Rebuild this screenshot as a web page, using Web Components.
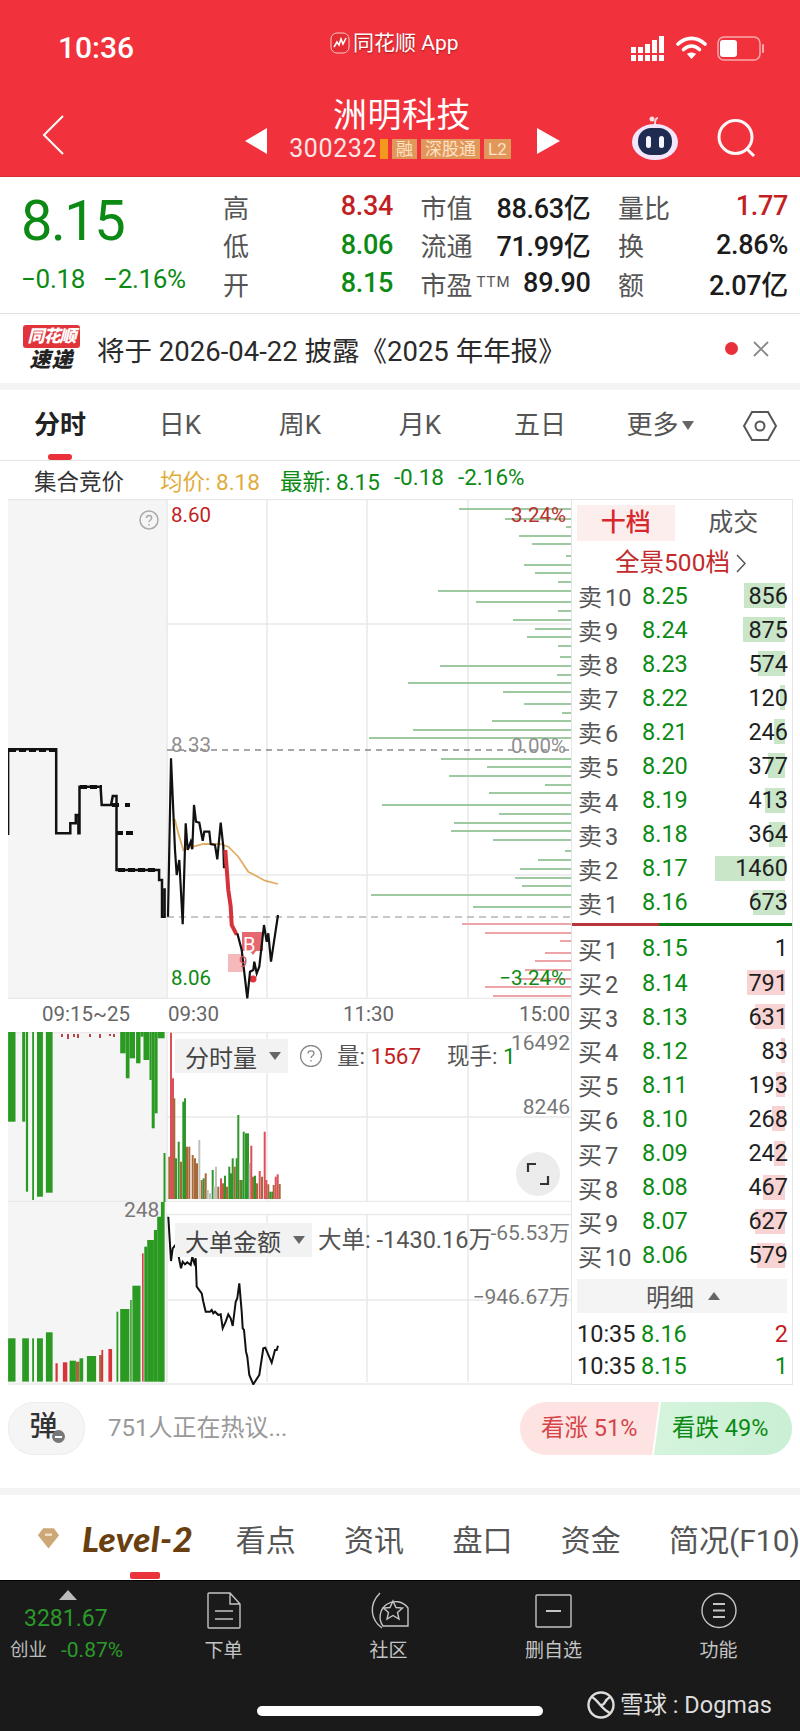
<!DOCTYPE html>
<html lang="zh">
<head>
<meta charset="utf-8">
<title>洲明科技</title>
<style>
  html, body { margin: 0; padding: 0; background: #fff; }
  body { width: 800px; height: 1731px; overflow: hidden; font-family: Roboto, "Noto Sans CJK SC", sans-serif; color: #222; }
  .band { display: block; height: 7px; background: #f4f4f4; }
</style>
</head>
<body>
<status-bar time="10:36" app="同花顺 App"></status-bar>
<stock-nav name="洲明科技" code="300232">
  <stock-tag>融</stock-tag><stock-tag>深股通</stock-tag><stock-tag>L2</stock-tag>
</stock-nav>
<quote-stats></quote-stats>
<notice-bar>将于 2026-04-22 披露《2025 年年报》</notice-bar>
<div class="band"></div>
<period-tabs></period-tabs>
<auction-row></auction-row>
<chart-section>
  <price-chart slot="charts"></price-chart>
  <time-axis slot="charts"></time-axis>
  <volume-chart slot="charts"></volume-chart>
  <flow-chart slot="charts"></flow-chart>
  <order-book slot="book"></order-book>
</chart-section>
<comment-bar></comment-bar>
<div class="band"></div>
<info-tabs></info-tabs>
<app-footer></app-footer>

<script>
const FONT = 'Roboto, "Noto Sans CJK SC", sans-serif';
const GREEN = '#0c8a14';
const RED = '#c21f24';

// every component is just a shadow root with its own style block
class Base extends HTMLElement {
  constructor() {
    super();
    this.attachShadow({ mode: 'open' });
  }
  connectedCallback() {
    this.shadowRoot.innerHTML = this.render();
  }
  attr(name, fallback = '') {
    return this.hasAttribute(name) ? this.getAttribute(name) : fallback;
  }
}

class StatusBar extends Base {
  render() {
    return `<style>
      :host { display: flex; height: 90px; background: #f1323c; color: #fff; font-family: ${FONT}; box-sizing: border-box; padding: 32px 36px 0 58px; justify-content: space-between; align-items: flex-start; }
      .time { font-size: 30px; font-weight: 500; line-height: 32px; width: 272px; }
      .app { display: flex; align-items: center; gap: 3px; font-size: 21px; line-height: 22px; text-shadow: 0 1px 2px rgba(90,0,0,.5); flex: 1; height: 22px; }
      .icons { display: flex; gap: 10px; margin-top: 4px; }
    </style>
    <div class="time">${this.attr('time')}</div>
    <div class="app">
      <svg width="20" height="22" viewBox="0 0 20 22"><rect x="1" y="1" width="18" height="20" rx="6" fill="#e52b33" stroke="#f9c9c9"/><path d="M4 15l3-5 2 3 2-6 2 5 3-6" fill="none" stroke="#fff" stroke-width="1.6"/></svg>
      <span>${this.attr('app')}</span>
    </div>
    <div class="icons">
      <svg width="33" height="25" viewBox="0 0 33 25" fill="#fff">
        <rect x="0" y="11" width="5" height="6"/><rect x="0" y="19" width="5" height="6"/>
        <rect x="7" y="11" width="5" height="6"/><rect x="7" y="19" width="5" height="6"/>
        <rect x="14" y="8" width="5" height="9"/><rect x="14" y="19" width="5" height="6"/>
        <rect x="21" y="4" width="5" height="13"/><rect x="21" y="19" width="5" height="6"/>
        <rect x="28" y="0" width="5" height="17"/><rect x="28" y="19" width="5" height="6"/>
      </svg>
      <svg width="31" height="25" viewBox="0 0 31 25" fill="none" stroke="#fff" stroke-width="3.6" stroke-linecap="round" style="margin-left:2px">
        <path d="M2 8c8-7.500 19-7.500 27 0"/><path d="M7.500 13.500c5-4.500 11-4.500 16 0"/><path d="M15.500 23l-4.500-5c2.700-2 6.300-2 9 0z" fill="#fff" stroke="none"/>
      </svg>
      <svg width="47" height="25" viewBox="0 0 47 25" style="margin-left:0">
        <rect x="1" y="1" width="42" height="23" rx="6" fill="none" stroke="#f8a9ac" stroke-width="1.500"/>
        <rect x="3" y="4" width="17" height="17" rx="3" fill="#fff"/>
        <rect x="45" y="8" width="2" height="9" rx="1" fill="#f8a9ac"/>
      </svg>
    </div>`;
  }
}

class StockTag extends Base {
  render() {
    return `<style>
      :host { display: inline-block; height: 20px; line-height: 20px; padding: 0 4px; background: #e2975a; color: #fbe3c6; font-size: 17px; text-align: center; font-family: ${FONT}; }
    </style><slot></slot>`;
  }
}

class StockNav extends Base {
  render() {
    return `<style>
      :host { display: grid; grid-template-columns: 245px 22px 270px 23px 1fr; height: 87px; background: #f1323c; color: #fff; font-family: ${FONT}; box-sizing: border-box; border-bottom: 1px solid #d92d33; align-items: center; }
      .back { padding: 6px 0 0 42px; }
      .mid { text-align: center; height: 87px; }
      .name { font-size: 34px; line-height: 46px; margin-top: 2px; letter-spacing: .5px; }
      .code { display: flex; justify-content: center; align-items: center; gap: 4px; height: 20px; margin-top: 1px; margin-left: -4px; }
      .num { font-size: 25px; letter-spacing: .6px; color: #fbe6e6; line-height: 20px; }
      .bar { width: 8px; height: 20px; background: #f39a1d; margin-left: -1px; margin-right: 0; }
      .tri { margin-top: 14px; }
      .right { display: flex; align-items: center; padding: 8px 0 0 72px; gap: 39px; }
    </style>
    <div class="back"><svg width="24" height="40" viewBox="0 0 24 40" fill="none" stroke="#fff" stroke-width="2"><path d="M21 1 2 20l19 19"/></svg></div>
    <svg class="tri" width="22" height="26" viewBox="0 0 22 26"><path d="M22 0v26L0 13z" fill="#fff"/></svg>
    <div class="mid">
      <div class="name">${this.attr('name')}</div>
      <div class="code"><span class="num">${this.attr('code')}</span><span class="bar"></span><slot></slot></div>
    </div>
    <svg class="tri" width="23" height="26" viewBox="0 0 23 26"><path d="M0 0v26l23-13z" fill="#fff"/></svg>
    <div class="right">
      <svg width="46" height="44" viewBox="0 0 46 44">
        <path d="M23 8c0-4 1-6 3-6" fill="none" stroke="#f6d5df" stroke-width="2"/><circle cx="20" cy="3" r="2.500" fill="#f9dfe5"/>
        <ellipse cx="23" cy="26" rx="23" ry="18" fill="#f1e6fb"/>
        <rect x="6" y="12" width="34" height="27" rx="13" fill="#1f2b50"/>
        <rect x="14" y="20" width="5" height="12" rx="2.500" fill="#f5f5ff"/><rect x="27" y="20" width="5" height="12" rx="2.500" fill="#f5f5ff"/>
      </svg>
      <svg width="40" height="38" viewBox="0 0 40 38" fill="none" stroke="#fff8f8" stroke-width="3"><circle cx="18.500" cy="18" r="16.500"/><path d="m30 30 7 7"/></svg>
    </div>`;
  }
}

class StatPair extends Base {
  render() {
    const color = this.attr('color', '#1c1c1c');
    return `<style>
      :host { display: flex; justify-content: space-between; align-items: center; font-family: ${FONT}; font-size: 27px; height: 38.500px; white-space: nowrap; }
      .k { color: #555; font-size: 26px; }
      .k sup { font-size: 15px; vertical-align: 8px; line-height: 0; margin-left: 4px; letter-spacing: 1px; }
      .v { color: ${color}; font-weight: 500; letter-spacing: -.3px; }
    </style>
    <span class="k">${this.attr('k')}${this.hasAttribute('sup') ? `<sup>${this.attr('sup')}</sup>` : ''}</span>
    <span class="v">${this.attr('v')}</span>`;
  }
}

class QuoteStats extends Base {
  render() {
    const pairs = [
      ['高', '8.34', RED], ['市值', '88.63亿'], ['量比', '1.77', RED],
      ['低', '8.06', GREEN], ['流通', '71.99亿'], ['换', '2.86%'],
      ['开', '8.15', GREEN], ['市盈', '89.90', '', 'TTM'], ['额', '2.07亿']
    ];
    return `<style>
      :host { display: flex; height: 137px; box-sizing: border-box; border-bottom: 1px solid #e2e2e2; font-family: ${FONT}; padding: 10px 0 0 21px; }
      .left { width: 202px; }
      .big { font-size: 56px; line-height: 64px; color: ${GREEN}; margin-top: 2px; letter-spacing: -1.500px; transform-origin: left; }
      .chg { display: flex; gap: 18px; font-size: 26px; color: ${GREEN}; margin-top: 11px; white-space: nowrap; letter-spacing: -.3px; }
      .grid { display: grid; grid-template-columns: 170px 170px 170px; column-gap: 27.500px; align-content: start; }
    </style>
    <div class="left">
      <div class="big">8.15</div>
      <div class="chg"><span>−0.18</span><span>−2.16%</span></div>
    </div>
    <div class="grid">
      ${pairs.map(p => `<stat-pair k="${p[0]}" v="${p[1]}" ${p[2] ? `color="${p[2]}"` : ''} ${p[3] ? `sup="${p[3]}"` : ''}></stat-pair>`).join('')}
    </div>`;
  }
}

class NoticeBar extends Base {
  render() {
    return `<style>
      :host { display: flex; align-items: center; height: 69px; font-family: ${FONT}; padding-left: 23px; position: relative; }
      .logo { width: 57px; text-align: center; font-style: italic; font-weight: 900; margin-right: 17px; }
      .logo b { display: block; background: #e0343a; color: #fff; font-size: 17px; line-height: 23px; border-radius: 3px; letter-spacing: -1px; }
      .logo i { display: block; color: #222; font-size: 21px; line-height: 24px; letter-spacing: 1px; }
      .txt { flex: 1; font-size: 27.500px; color: #2a2a2a; white-space: nowrap; }
      .dot { width: 13px; height: 13px; border-radius: 50%; background: #e8303a; margin-right: 15px; }
      svg { margin-right: 31px; }
    </style>
    <div class="logo"><b>同花顺</b><i>速递</i></div>
    <div class="txt"><slot></slot></div>
    <div class="dot"></div>
    <svg width="16" height="16" viewBox="0 0 16 16" stroke="#888" stroke-width="1.800"><path d="m1 1 14 14M15 1 1 15"/></svg>`;
  }
}

class PeriodTabs extends Base {
  render() {
    const tabs = ['分时', '日K', '周K', '月K', '五日'];
    return `<style>
      :host { display: grid; grid-template-columns: repeat(6, 120px) 80px; height: 71px; box-sizing: border-box; border-bottom: 1px solid #e6e6e6; font-family: ${FONT}; font-size: 26px; color: #555; }
      .t { position: relative; text-align: center; line-height: 70px; }
      .on { color: #222; font-weight: 700; }
      .on::after { content: ""; position: absolute; left: 48px; top: 64px; width: 24px; height: 6px; border-radius: 3px; background: #ea3038; }
      .more i { display: inline-block; width: 0; height: 0; border: 6px solid transparent; border-top: 9px solid #666; border-bottom: 0; margin-left: 3px; vertical-align: 4px; }
      .hex { display: flex; justify-content: center; padding-top: 20px; box-sizing: border-box; }
    </style>
    ${tabs.map((t, i) => `<div class="t ${i === 0 ? 'on' : ''}">${t}</div>`).join('')}
    <div class="t more">更多<i></i></div>
    <div class="hex"><svg width="34" height="32" viewBox="0 0 34 32" fill="none" stroke="#555" stroke-width="2"><path d="M9 2h16l8 14-8 14H9L1 16z"/><circle cx="17" cy="16" r="4.500"/></svg></div>`;
  }
}

class AuctionRow extends Base {
  render() {
    return `<style>
      :host { display: flex; align-items: center; height: 38px; padding-left: 34px; font-family: ${FONT}; font-size: 22.500px; white-space: nowrap; }
      .a { color: #333; width: 126px; }
      .o { color: #e0ac3c; width: 120px; }
      .g { color: ${GREEN}; display: flex; gap: 14px; }
    </style>
    <span class="a">集合竞价</span><span class="o">均价: 8.18</span>
    <span class="g"><span>最新: 8.15</span><span>-0.18</span><span>-2.16%</span></span>`;
  }
}

class ChartSection extends Base {
  render() {
    return `<style>
      :host { display: grid; grid-template-columns: 563px 222px; height: 886px; padding-left: 8px; }
      .charts { display: flex; flex-direction: column; }
    </style>
    <div class="charts"><slot name="charts"></slot></div>
    <slot name="book"></slot>`;
  }
}

// zoomed crops were not square, these turn crop coords back to page coords
const fromCrop3 = pts => pts.map(([x, y]) => `${(x / 2.703).toFixed(1)},${(700 + y / 3).toFixed(1)}`).join(' ');
const fromCropP = (pts, top) => pts.map(([x, y]) => `${(160 + x / 3).toFixed(1)},${(top + y / 3).toFixed(1)}`).join(' ');

const SELL_DEPTH = [[459,509],[505,519],[566,527],[519,536],[532,544],[566,556],[524,565],[535,573],[558,582],[438,591],[476,602],[558,611],[513,620],[535,629],[527,637],[558,646],[560,657],[440,666],[557,675],[408,683],[503,692],[524,704],[562,713],[492,721],[413,730],[369,738],[441,759],[487,767],[449,776],[545,785],[489,793],[382,805],[499,814],[454,823],[451,831],[493,840],[565,851],[538,860],[520,869],[515,878],[522,886],[371,895],[473,907]];
const BUY_DEPTH = [[462,924],[485,933],[560,941],[545,953],[535,961],[525,970],[518,979],[485,987],[493,996]];

const AUCTION_LINE = [[22,405],[22,148],[152,148],[152,400],[190,400],[190,370],[205,370],[205,345],[212,345],[212,400],[215,400],[215,260],[272,260],[275,315],[300,315],[305,288],[315,288],[315,510],[430,510],[430,540],[438,540],[438,650],[445,650],[445,565]];
const PRICE_A = [[24,500],[33,25],[45,300],[50,375],[58,330],[68,523],[77,220],[83,300],[92,275],[97,298],[102,165],[108,215],[118,218],[128,272],[133,245],[148,245],[152,282],[165,285],[172,328],[182,218],[190,290],[192,355]];
const PRICE_RED = [[196,300],[205,420],[212,470],[215,525],[228,550],[232,550]];
const PRICE_B = [[232,550],[245,600],[262,745],[270,665],[280,660],[283,635],[290,670],[298,650],[312,525],[320,575],[325,550],[333,635],[342,575],[354,495]];
const AVG = [[38,210],[45,210],[55,250],[70,300],[100,290],[130,282],[180,282],[205,290],[235,320],[265,365],[315,392],[354,402]];

class PriceChart extends Base {
  render() {
    const depth = (list, color) => list.map(([x, y]) => `<line x1="${x}" y1="${y}" x2="571" y2="${y}" stroke="${color}" stroke-width="2"/>`).join('');
    return `<style>
      :host { display: block; position: relative; width: 563px; height: 500px; font-family: ${FONT}; font-size: 20.500px; }
      svg { display: block; }
      span { position: absolute; line-height: 24px; white-space: nowrap; }
      .l { left: 163px; } .r { right: 5px; }
      .q { left: 131px; top: 11px; }
    </style>
    <svg width="563" height="500" viewBox="8 499 563 500">
      <rect x="8" y="499" width="159" height="500" fill="#f5f5f5"/>
      <g stroke="#e9e9e9" stroke-width="1.500">
        <path d="M8 499.500h563M167 499v500M267 499v500M367 499v500M468 499v500M8 998.500h563M167 624h404M167 875h404"/>
      </g>
      <path d="M8 624h159M8 875h159" stroke="#fff" stroke-width="1" stroke-dasharray="1 3"/>
      ${depth(SELL_DEPTH, '#9fc9a1')}${depth(BUY_DEPTH, '#eda4a8')}
      <line x1="167" y1="750" x2="571" y2="750" stroke="#8a8a8a" stroke-width="1.500" stroke-dasharray="6 5"/>
      <line x1="167" y1="917" x2="571" y2="917" stroke="#b5b5b5" stroke-width="1.500" stroke-dasharray="7 5"/>
      <polyline points="${fromCrop3(AUCTION_LINE)}" fill="none" stroke="#111" stroke-width="2.500"/>
      <path d="M9 750h48M80 787h22M112 805h10M116 833h18M125 805h5M116 833h0M118 870h38" stroke="#111" stroke-width="4" stroke-dasharray="7 3"/>
      <polyline points="${fromCropP(AVG, 750)}" fill="none" stroke="#e2ac62" stroke-width="1.800"/>
      <polyline points="${fromCropP(PRICE_A, 750)}" fill="none" stroke="#111" stroke-width="2.200"/>
      <polyline points="${fromCropP(PRICE_RED, 750)}" fill="none" stroke="#d6323a" stroke-width="4"/>
      <rect x="228" y="954" width="15" height="18" rx="1" fill="#f6b9bb"/>
      <path d="M242 932h21v19h-7l-3 4-3-4h-8z" fill="#e4686d"/>
      <circle cx="253" cy="979" r="3.500" fill="#e0343a"/>
      <polyline points="${fromCropP(PRICE_B, 750)}" fill="none" stroke="#111" stroke-width="2.200"/>
    </svg>
    <span class="q"><svg width="20" height="20" viewBox="0 0 20 20"><circle cx="10" cy="10" r="9" fill="none" stroke="#aaa" stroke-width="1.500"/><path d="M7.500 8c0-3.200 5.200-3.200 5.200 0 0 2-2.600 2-2.600 4M10.100 14v1.500" fill="none" stroke="#aaa" stroke-width="1.500"/></svg></span>
    <span class="l" style="top:4px;color:${RED}">8.60</span>
    <span class="r" style="top:4px;color:#b8312f">3.24%</span>
    <span class="l" style="top:234px;color:#8f8f8f">8.33</span>
    <span class="r" style="top:235px;color:#8f8f8f">0.00%</span>
    <span class="l" style="top:467px;color:${GREEN}">8.06</span>
    <span class="r" style="top:467px;color:${GREEN}">−3.24%</span>
    <span style="left:235px;top:434px;color:#fff;font-size:20px">B</span>
    <span style="left:231px;top:451px;color:#c9545a;font-size:15px">9</span>`;
  }
}

class TimeAxis extends Base {
  render() {
    return `<style>
      :host { display: block; position: relative; height: 33px; font-family: ${FONT}; font-size: 20.500px; color: #666; }
      span { position: absolute; top: 3px; line-height: 24px; }
    </style>
    <span style="left:34px">09:15~25</span><span style="left:160px">09:30</span>
    <span style="left:335px">11:30</span><span style="right:1px">15:00</span>`;
  }
}

const hang = [[22,42,305],[60,68,305],[70,76,515],[87,92,540],[100,116,530],[124,142,518],[325,340,100],[340,350,175],[350,365,115],[368,380,130],[380,388,50],[388,404,120],[404,410,180],[410,418,325],[418,426,280],[426,445,55]];
const rise = [[25,380,'b'],[30,8,'r'],[36,145,'r'],[40,205,'b'],[45,385,'g'],[53,335,'g'],[60,395,'b'],[67,215,'g'],[72,205,'g'],[78,350,'b'],[85,350,'b'],[95,375,'b'],[102,385,'b'],[108,400,'b'],[115,330,'y'],[122,450,'b'],[128,445,'g'],[134,430,'b'],[140,480,'y'],[147,490,'y'],[155,420,'g'],[160,470,'y'],[165,410,'y'],[172,470,'b'],[180,445,'r'],[186,460,'b'],[192,437,'g'],[198,470,'b'],[205,410,'g'],[210,430,'g'],[215,385,'g'],[221,410,'b'],[227,385,'g'],[232,255,'g'],[238,450,'b'],[242,450,'g'],[248,305,'g'],[255,310,'g'],[261,310,'g'],[266,400,'y'],[271,347,'r'],[276,440,'b'],[282,437,'g'],[288,460,'b'],[296,423,'r'],[303,440,'b'],[311,305,'r'],[316,450,'r'],[322,463,'b'],[328,485,'g'],[334,485,'g'],[338,465,'b'],[344,440,'r'],[350,433,'r'],[356,462,'b']];
const BAR = { r: '#dc5157', g: '#2f962a', b: '#a8693a', y: '#bfc2bb' };

// small dropdown chip used on the two lower panes
class PaneChip extends Base {
  render() {
    return `<style>
      :host { position: absolute; display: flex; align-items: center; gap: 12px; box-sizing: border-box; height: 34px; padding: 0 7px 0 10px; background: #f2f2f2; font-size: 24px; color: #444; white-space: nowrap; }
      i { width: 0; height: 0; border: 6px solid transparent; border-top: 8px solid #666; border-bottom: 0; }
    </style><slot></slot><i></i>`;
  }
}

class VolumeChart extends Base {
  render() {
    const X = x => (x / 2.703).toFixed(1);
    return `<style>
      :host { display: block; position: relative; width: 563px; height: 170px; font-family: ${FONT}; font-size: 21px; color: #777; }
      svg { display: block; }
      span { position: absolute; line-height: 24px; white-space: nowrap; }
      pane-chip { left: 167px; top: 7px; }
      .exp { position: absolute; left: 508px; top: 120px; width: 44px; height: 44px; border-radius: 50%; background: #ececec; display: flex; align-items: center; justify-content: center; }
    </style>
    <svg width="563" height="170" viewBox="8 1032 563 170">
      <rect x="8" y="1032" width="159" height="170" fill="#f5f5f5"/>
      <path d="M8 1032.500h563M167 1032v170M267 1032v170M367 1032v170M468 1032v170M167 1117h404M8 1201.500h563" stroke="#e9e9e9" stroke-width="1.500"/>
      ${hang.map(([a, b, v]) => `<rect x="${X(a)}" y="1032" width="${((b - a) / 2.703).toFixed(1)}" height="${((v - 36) / 3).toFixed(1)}" fill="#2a9a22"/>`).join('')}
      <path d="M62 1034v3M68 1034v5M74 1034v3M78 1034v4M90 1034v3M100 1034v4M110 1034v2M114 1034v3" stroke="#b44" stroke-width="2"/>
      <rect x="163.500" y="1153" width="2" height="49" fill="#2a9a22"/>
      ${rise.map(([x, t, c]) => `<rect x="${(160 + x / 3).toFixed(1)}" y="${(1030 + t / 3).toFixed(1)}" width="2" height="${((507 - t) / 3).toFixed(1)}" fill="${BAR[c]}"/>`).join('')}
    </svg>
    <pane-chip>分时量</pane-chip>
    <span style="left:292px;top:13px"><svg width="22" height="22" viewBox="0 0 22 22" style="display:block"><circle cx="11" cy="11" r="10.500" fill="none" stroke="#888" stroke-width="1.300"/><path d="M8 8.500c0-3.600 6-3.600 6 0 0 2.200-3 2.300-3 4.500M11 15v1.500" fill="none" stroke="#888" stroke-width="1.300"/></svg></span>
    <span style="left:329px;top:12px;font-size:22.500px;color:#555">量: <b style="font-weight:400;color:${RED}">1567</b></span>
    <span style="left:439px;top:12px;font-size:22.500px;color:#555">现手: <b style="font-weight:400;color:${GREEN}">1</b></span>
    <span style="right:1px;top:-1px">16492</span>
    <span style="right:1px;top:63px">8246</span>
    <div class="exp"><svg width="24" height="24" viewBox="0 0 24 24" fill="none" stroke="#333" stroke-width="2.200"><path d="M10 2H2v8M14 22h8v-8"/></svg></div>`;
  }
}

const FLOW = [[25,5],[33,138],[38,100],[48,88],[57,130],[63,160],[68,140],[75,148],[82,142],[92,150],[97,125],[103,145],[107,130],[110,215],[125,235],[130,260],[137,290],[150,290],[155,285],[160,295],[165,290],[175,300],[182,298],[188,340],[197,320],[205,298],[212,310],[218,333],[227,260],[232,250],[238,205],[245,290],[248,340],[252,345],[258,410],[262,425],[268,480],[280,508],[298,480],[310,400],[316,398],[335,443],[345,405],[350,405],[354,392]];
const lowBars = [[18,22,1060],[22,42,955],[60,78,955],[87,92,955],[100,116,955],[124,142,937],[150,156,1030,'#d9333a'],[170,182,1027,'#d9333a'],[188,205,1022],[205,215,1025,'#a8693a'],[215,225,1015],[235,260,1008],[268,278,1005,'#a8693a'],[274,279,990,'#d9333a'],[293,303,987,'#d9333a'],[315,320,875],[325,350,867],[352,356,840],[358,380,797],[384,388,700,'#d9333a'],[390,398,680],[398,416,660],[416,425,630],[425,440,590],[435,445,515]];

class FlowChart extends Base {
  render() {
    const X = x => (x / 2.703).toFixed(1);
    return `<style>
      :host { display: block; position: relative; width: 563px; height: 183px; font-family: ${FONT}; font-size: 21px; color: #777; }
      svg { display: block; }
      span { position: absolute; line-height: 24px; white-space: nowrap; }
      pane-chip { left: 167px; top: 21px; }
    </style>
    <svg width="563" height="183" viewBox="8 1202 563 183">
      <rect x="8" y="1202" width="159" height="181" fill="#f5f5f5"/>
      <path d="M167 1214.500h404M167 1214v168M267 1214v168M367 1214v168M468 1214v168M167 1300h404M8 1384h563" stroke="#e9e9e9" stroke-width="1.500"/>
      ${lowBars.map(([a, b, v, c]) => `<rect x="${X(a)}" y="${(1020 + v / 3).toFixed(1)}" width="${((b - a) / 2.703).toFixed(1)}" height="${((1085 - v) / 3).toFixed(1)}" fill="${c || '#2a9a22'}"/>`).join('')}
      <polyline points="${fromCropP(FLOW, 1215)}" fill="none" stroke="#111" stroke-width="2"/>
    </svg>
    <span style="left:116px;top:-4px;color:#777">248</span>
    <pane-chip>大单金额</pane-chip>
    <span style="left:310px;top:26px;font-size:23.500px;color:#555">大单: -1430.16万</span>
    <span style="right:1px;top:19px">-65.53万</span>
    <span style="right:1px;top:83px">−946.67万</span>`;
  }
}

class BookRow extends Base {
  render() {
    const bar = this.attr('bar', '0');
    const bg = this.attr('side') === '卖' ? '#c9e6c9' : '#f8d3d3';
    return `<style>
      :host { display: grid; grid-template-columns: 64px 1fr auto; align-items: center; position: relative; height: 34.100px; padding: 0 4px 0 6px; font-family: ${FONT}; font-size: 23.500px; white-space: nowrap; }
      .s { color: #555; }
      .s b { font-weight: 400; font-size: 24px; margin-right: 3px; }
      .p { color: ${GREEN}; }
      .q { color: #1f1f1f; position: relative; }
      .bg { position: absolute; right: 7px; top: 5px; height: 25px; width: ${bar}px; background: ${bg}; }
    </style>
    <div class="bg"></div>
    <span class="s"><b>${this.attr('side')}</b>${this.attr('n')}</span>
    <span class="p">${this.attr('price')}</span>
    <span class="q">${this.attr('qty')}</span>`;
  }
}

class OrderBook extends Base {
  render() {
    const sell = [[10,'8.25',856,41],[9,'8.24',875,42],[8,'8.23',574,27],[7,'8.22',120,5],[6,'8.21',246,11],[5,'8.20',377,17],[4,'8.19',413,20],[3,'8.18',364,16],[2,'8.17',1460,70],[1,'8.16',673,32]];
    const buy = [[1,'8.15',1,0],[2,'8.14',791,38],[3,'8.13',631,30],[4,'8.12',83,4],[5,'8.11',193,9],[6,'8.10',268,13],[7,'8.09',242,11],[8,'8.08',467,22],[9,'8.07',627,30],[10,'8.06',579,28]];
    const row = (side, r) => `<book-row side="${side}" n="${r[0]}" price="${r[1]}" qty="${r[2]}" bar="${r[3]}"></book-row>`;
    return `<style>
      :host { display: block; box-sizing: border-box; height: 886px; border: 1px solid #e4e4e4; font-family: ${FONT}; width: 222px; }
      .tabs { display: flex; height: 36px; margin: 5px 0 0 5px; font-size: 25px; line-height: 36px; text-align: center; }
      .tabs div { width: 98px; color: #555; }
      .tabs .on { background: #fdeeee; color: #d8282d; font-weight: 500; }
      .tabs div + div { width: 118px; }
      .all { height: 38px; line-height: 44px; text-align: center; font-size: 24.500px; color: #c32a2c; margin-bottom: -1px; padding-right: 3px; }
      .all svg { margin-left: 6px; vertical-align: -2px; }
      .sep { height: 3px; margin: 4px 0 5px; background: linear-gradient(90deg, #b8343a 0 87px, #0d7d14 87px); }
      .head { height: 34px; margin: 7px 5px 5px; background: #f4f4f4; display: flex; align-items: center; justify-content: center; gap: 14px; font-size: 24px; color: #555; padding-left: 2px; box-sizing: border-box; }
      .head i { width: 0; height: 0; border: 6px solid transparent; border-bottom: 8px solid #666; border-top: 0; }
      .d { display: grid; grid-template-columns: 64px 1fr auto; align-items: center; height: 32px; padding: 0 4px 0 5px; font-size: 23.500px; color: #222; }
      .d span:nth-child(2) { color: ${GREEN}; }
    </style>
    <div class="tabs"><div class="on">十档</div><div>成交</div></div>
    <div class="all">全景500档<svg width="10" height="19" viewBox="0 0 10 19" fill="none" stroke="#555" stroke-width="1.500"><path d="m1 1 8 8.500L1 18"/></svg></div>
    ${sell.map(r => row('卖', r)).join('')}
    <div class="sep"></div>
    ${buy.map(r => row('买', r)).join('')}
    <div class="head">明细<i></i></div>
    <div class="d"><span>10:35</span><span>8.16</span><span style="color:${RED}">2</span></div>
    <div class="d"><span>10:35</span><span>8.15</span><span style="color:${GREEN}">1</span></div>`;
  }
}

class CommentBar extends Base {
  render() {
    return `<style>
      :host { display: flex; height: 103px; box-sizing: border-box; padding: 17px 8px 0; font-family: ${FONT}; }
      .dan { position: relative; width: 77px; height: 53px; border-radius: 26px; background: #f5f5f5; box-shadow: inset 0 0 0 1px #eee; text-align: center; font-size: 28px; line-height: 50px; font-weight: 500; color: #333; padding-right: 6px; box-sizing: border-box; }
      .dan i { position: absolute; left: 44px; top: 28px; width: 13px; height: 13px; border-radius: 50%; background: #777; }
      .dan i::after { content: ""; position: absolute; left: 3px; top: 6px; width: 7px; height: 2px; background: #fff; }
      .hint { flex: 1; margin-left: 23px; font-size: 24px; line-height: 53px; color: #999; white-space: nowrap; }
      .vote { display: flex; height: 53px; font-size: 23.500px; line-height: 53px; white-space: nowrap; }
      .up { width: 139px; background: #fde3e1; color: #d5454a; border-radius: 26px 0 0 26px; padding-left: 21px; box-sizing: border-box; clip-path: polygon(0 0, 100% 0, calc(100% - 7px) 100%, 0 100%); }
      .down { width: 138px; margin-left: -5px; background: linear-gradient(90deg, #d5f4dd, #c9efd4); color: ${GREEN}; border-radius: 0 26px 26px 0; padding-left: 18px; box-sizing: border-box; clip-path: polygon(7px 0, 100% 0, 100% 100%, 0 100%); }
    </style>
    <div class="dan">弹<i></i></div>
    <div class="hint">751人正在热议...</div>
    <div class="vote"><div class="up">看涨 51%</div><div class="down">看跌 49%</div></div>`;
  }
}

class InfoTabs extends Base {
  render() {
    return `<style>
      :host { display: flex; position: relative; height: 85px; align-items: center; padding-left: 37px; overflow: hidden; font-family: ${FONT}; font-size: 30px; color: #555; white-space: nowrap; }
      svg { margin-right: 22px; }
      .lv { position: relative; font-family: Lato, Roboto, sans-serif; font-style: italic; font-weight: 900; font-size: 35px; color: #6a3f10; width: 174px; letter-spacing: .5px; }
      .lv::after { content: ""; position: absolute; left: 48px; top: 55px; width: 30px; height: 7px; border-radius: 2px; background: #e9323a; }
      span { width: 108.300px; flex: none; }
      span:last-child { width: auto; }
    </style>
    <svg width="26" height="24" viewBox="0 0 26 24"><path d="M7 1h12l6 8-12 15L1 9z" fill="#cda876"/><rect x="9" y="7" width="8" height="2.500" fill="#f3e6d2"/></svg>
    <div class="lv">Level-2</div>
    <span>看点</span><span>资讯</span><span>盘口</span><span>资金</span><span>简况(F10)</span>`;
  }
}

class NavItem extends Base {
  render() {
    return `<style>
      :host { display: flex; flex-direction: column; align-items: center; padding-top: 11px; font-family: ${FONT}; font-size: 19px; color: #c4c4c4; }
      .i { height: 37px; display: flex; align-items: center; margin-bottom: 6px; }
    </style>
    <div class="i"><slot></slot></div><div>${this.attr('label')}</div>`;
  }
}

class AppFooter extends Base {
  render() {
    return `<style>
      :host { display: block; position: relative; height: 151px; background: #1a1a1a; border-top: 1px solid #000; box-sizing: border-box; font-family: ${FONT}; }
      .nav { display: grid; grid-template-columns: 141px repeat(4, 165px); }
      .idx { position: relative; font-size: 23px; color: #2a9a2a; padding: 21px 0 0 24px; line-height: 34px; }
      .idx::before { content: ""; position: absolute; left: 59px; top: 9px; border: 9px solid transparent; border-bottom: 10px solid #bbb; border-top: 0; }
      .sub { display: flex; margin-left: -14px; gap: 14px; line-height: 28px; font-size: 21px; white-space: nowrap; }
      .sub b { font-weight: 400; color: #bbb; font-size: 18.500px; }
      .home { position: absolute; left: 257px; top: 125px; width: 286px; height: 10px; border-radius: 5px; background: #fff; }
      .mark { position: absolute; left: 587px; top: 109px; display: flex; align-items: center; gap: 5px; color: #ddd; font-size: 23.500px; line-height: 28px; white-space: nowrap; }
    </style>
    <div class="nav">
      <div class="idx">3281.67<div class="sub"><b>创业</b><span>-0.87%</span></div></div>
      <nav-item label="下单"><svg width="34" height="37" viewBox="0 0 34 37" fill="none" stroke="#c4c4c4" stroke-width="1.400"><path d="M2 1h21l10 11v23a1 1 0 0 1-1 1H2a1 1 0 0 1-1-1V2a1 1 0 0 1 1-1zM23 1v11h10M8 19h18M8 27h18"/></svg></nav-item>
      <nav-item label="社区"><svg width="40" height="37" viewBox="0 0 40 37" fill="none" stroke="#c4c4c4" stroke-width="1.400"><path d="M13 36C2 28 -1 13 11 1"/><path d="M14 34h25V16A12.500 12.500 0 1 0 14 34z" transform="translate(0 0)"/><path d="m24 9 3 6.500 6.500.5-5 4.500 1.500 6.500-6-3.500-6 3.500 1.500-6.500-5-4.500 6.500-.5z"/></svg></nav-item>
      <nav-item label="删自选"><svg width="37" height="34" viewBox="0 0 37 34" fill="none" stroke="#c4c4c4" stroke-width="1.400"><rect x="1" y="1" width="35" height="32" rx="1"/><path d="M11 17h15" stroke-width="2"/></svg></nav-item>
      <nav-item label="功能"><svg width="36" height="37" viewBox="0 0 36 37" fill="none" stroke="#c4c4c4" stroke-width="1.400"><circle cx="18" cy="18.500" r="17"/><path d="M12 12h12M12 18.500h12M12 25h12" stroke-width="2"/></svg></nav-item>
    </div>
    <div class="home"></div>
    <div class="mark">
      <svg width="28" height="30" viewBox="0 0 28 30" fill="none" stroke="#ddd" stroke-width="2.400"><circle cx="14" cy="15" r="12.500"/><path d="M5 7c7 4 9 12 18 16M23 7c-7 4-4 8-9 8"/></svg>
      <span>雪球 : Dogmas</span>
    </div>`;
  }
}

customElements.define('status-bar', StatusBar);
customElements.define('stock-tag', StockTag);
customElements.define('stock-nav', StockNav);
customElements.define('stat-pair', StatPair);
customElements.define('quote-stats', QuoteStats);
customElements.define('notice-bar', NoticeBar);
customElements.define('period-tabs', PeriodTabs);
customElements.define('auction-row', AuctionRow);
customElements.define('chart-section', ChartSection);
customElements.define('price-chart', PriceChart);
customElements.define('time-axis', TimeAxis);
customElements.define('pane-chip', PaneChip);
customElements.define('volume-chart', VolumeChart);
customElements.define('flow-chart', FlowChart);
customElements.define('book-row', BookRow);
customElements.define('order-book', OrderBook);
customElements.define('comment-bar', CommentBar);
customElements.define('info-tabs', InfoTabs);
customElements.define('nav-item', NavItem);
customElements.define('app-footer', AppFooter);
</script>
</body>
</html>
